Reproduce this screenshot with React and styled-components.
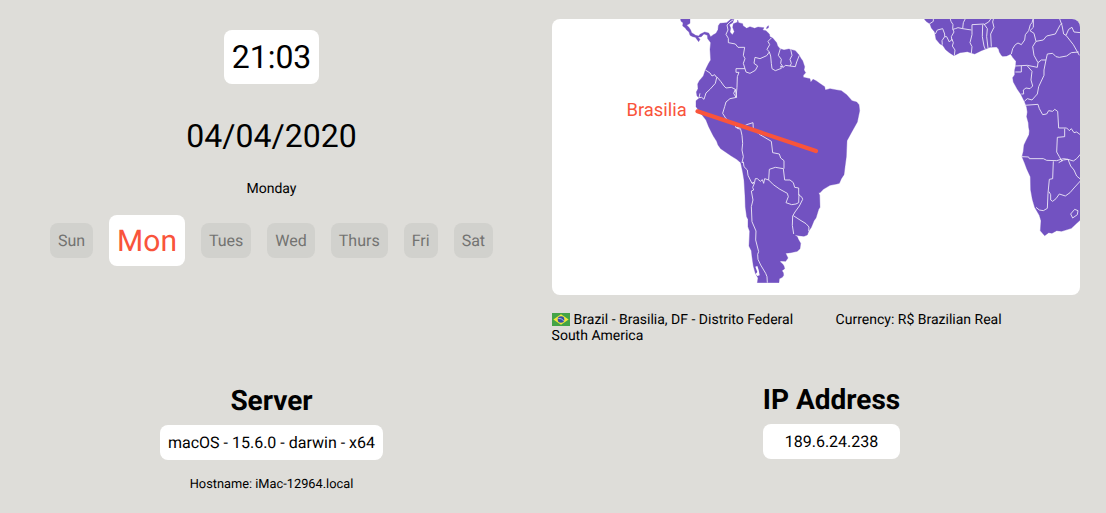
import React from 'react';
import styled, { createGlobalStyle, css } from 'styled-components';

const GlobalStyle = createGlobalStyle`
  * { box-sizing: border-box; }
  body {
    margin: 0;
    background: #deddd9;
    color: #000;
    font-family: Roboto, "Liberation Sans", sans-serif;
    font-size: 16px;
    line-height: 19px;
    text-rendering: geometricPrecision;
  }
`;

const Dashboard = styled.main`
  display: grid;
  grid-template-columns: 543px 1fr;
  grid-template-rows: 384px 129px;
  height: 513px;
  overflow: hidden;
`;

const DateTime = styled.section`
  display: flex;
  flex-direction: column;
  align-items: center;
  padding-top: 30px;
`;

const chip = css`
  padding: 8px;
  border-radius: 8px;
  background: #fff;
`;

const Clock = styled.time`
  ${chip}
  font-size: 32px;
  line-height: 38px;
`;

const FullDate = styled.div`
  margin-top: 33px;
  font-size: 32px;
  line-height: 38px;
`;

const Weekday = styled.div`
  margin-top: 26px;
  font-size: 14px;
  line-height: 16px;
`;

const Week = styled.ul`
  display: flex;
  align-items: center;
  gap: 16px;
  margin: 18px 0 0;
  padding: 0;
  list-style: none;
`;

const Day = styled.li`
  padding: ${({ $active }) => ($active ? '9px 8px 7px' : '8px')};
  border-radius: 8px;
  background: ${({ $active }) => ($active ? '#fff' : '#d1d1cd')};
  color: ${({ $active }) => ($active ? '#f9543b' : '#737371')};
  font-size: ${({ $active }) => ($active ? '30px' : '16px')};
  line-height: ${({ $active }) => ($active ? '35px' : '19px')};
`;

const Location = styled.section`
  padding: 19px 26px 0 9px;
`;

const MapCard = styled.div`
  height: 276px;
  border-radius: 8px;
  background: #fff;
  overflow: hidden;
`;

const WorldMap = styled.svg`
  display: block;
  width: 528px;
  height: 264px;
`;

const Land = styled.path`
  fill: #7252c1;
  stroke: #7252c1;
  stroke-width: 1;
  stroke-linejoin: round;
`;

const Borders = styled.path`
  fill: none;
  stroke: #eeeaf7;
  stroke-width: 2.7;
  stroke-linejoin: round;
`;

const Water = styled.path`
  fill: #fff;
`;

const Connector = styled.line`
  stroke: #f9543b;
  stroke-width: 4.2;
  stroke-linecap: round;
`;

const CityName = styled.text`
  fill: #f9543b;
  font-size: 18.4px;
`;

const Details = styled.div`
  display: grid;
  grid-template-columns: 284px 1fr;
  margin-top: 17px;
  margin-left: -0.4px;
  font-size: 14px;
  line-height: 16px;
`;

const Flag = styled.svg`
  display: inline-block;
  width: 18px;
  height: 13px;
  margin-right: 4px;
  vertical-align: -2px;
`;

const System = styled.section`
  display: flex;
  flex-direction: column;
  align-items: center;
`;

const Network = styled(System)`
  padding-left: 14px;
  margin-top: -1px;
`;

const Stack = styled.div`
  display: flex;
  flex-direction: column;
  text-align: center;
`;

const Title = styled.h2`
  margin: 0 0 8px;
  font-size: 28px;
  line-height: 33px;
  font-weight: 700;
`;

const Value = styled.div`
  ${chip}
`;

const Hostname = styled.div`
  margin-top: 17px;
  font-size: 12.8px;
  line-height: 15px;
`;

const week = ['Sun', 'Mon', 'Tues', 'Wed', 'Thurs', 'Fri', 'Sat'];

const americaCoast =
  'M30 20 33 34 39 38 38 48 46 54 50 60 57 66 60 76 68 80 76 82 82 90 86 95 90 88 84 82 94 80 102 72 112 76 113 86 119 94 122 98 120 118 122 150 116 160 106 180 100 198 88 212 83 222 84 236 79 246 81 258 88 264 78 272 78 290 92 310 108 330 116 350 130 378 140 394 144 405 152 416 184 438 200 448 212 458 218 486 222 510 225 558 226 590 230 620 234 628 234 650 239 664 237 708 244 722 246 740 250 768 256 790 264 804 262 818H327L328 806 337 802 341 796 340 788 336 782 344 776 342 768 338 762 332 757 330 753 347 754 354 744 347 730 362 728 382 724 390 716 392 700 385 688 382 680 374 674 386 677 402 679 412 675 416 664 424 652 432 632 438 624 446 598 450 592 449 556 446 548 450 548 460 538 480 526 500 522 508 520 514 506 522 494 525 470 529 440 531 392 544 368 562 336 569 302 567 284 560 276 546 272 530 254 514 242 500 240 480 236 466 240 464 230 452 222 438 212 429 208 422 217 420 206 400 202 400 196 407 188 402 180 404 170 398 152 392 144 388 136 376 122 356 117 342 120 330 116 323 108 320 98 308 84 300 80 298 72 288 62 278 60 282 53 264 51 254 55 240 50 230 55 219 47 218 41 206 38 203 30 202 37 190 41 188 52 193 65 187 74 180 66 182 54 178 44 188 38 192 27 182 28 170 38 150 40 145 47 144 59 138 70 130 74 122 80 116 69 104 66 90 73 86 78 77 76 65 68 62 60 56 51 50 46 60 40 60 20Z M291 50 296 47 295 54 289 56Z';

const americaBorders =
  'M190 29 180 36 171 45 174 60 168 73 175 85 175 98 196 102 204 112 224 112 220 136 225 146 220 160 225 176 198 176 198 187 207 187 202 200 201 232 198 262M225 176 228 186 240 190 256 181 263 168 252 160 255 142 270 146 290 137 298 126M304 84 294 94 299 104 291 118 298 126 302 138 304 160 306 176 316 182 334 175 332 168 340 172M331 116 325 136 334 148 332 160 340 172 346 166 360 168 364 160 360 148 366 136 362 118M360 168 376 170 380 156 388 136M106 180 120 189 126 198 134 194 140 203 136 220 120 238 108 249 102 268 95 262 87 263 90 250M140 200 152 214 162 228 168 234 184 232 196 238 191 250 198 262M196 238 200 262 180 266 168 276 164 290 158 310 168 326 186 340 196 338 197 352 212 354 220 350 230 344 249 338 250 358 270 374 304 394 308 428 328 432 332 444 342 452 342 476M200 354 212 358 216 376 218 400 216 420 220 440 216 458 220 456 222 470 232 480 234 496 246 520 254 516 256 506 262 506 271 514 277 509 281 520 284 506 296 510 298 478 316 472 340 476 344 510 360 510 370 518 374 532 386 534 386 554 396 562 398 568 388 588 375 606 368 618 367 646 371 672M296 510 310 524 330 538 352 550 355 560 348 578 365 584 378 582 386 578 387 552M370 617 390 630 408 641 417 651 416 663M246 520 254 518 248 532 251 540 244 543 249 570 244 590 246 635 258 663 257 690 266 725 263 733 264 748 272 765 287 790 291 800 292 818';

const africaCoast =
  'M38 20 48 34 60 42 64 54 74 66 78 88 90 102 98 106 107 119 118 128 132 137 150 128 172 125 194 132 214 122 240 112 260 111 266 118 268 126 274 136 278 139 290 138 302 132 308 142 318 154 317 168 314 180 314 194 308 203 310 216 322 238 332 252 344 276 350 292 352 306 350 320 355 338 356 352 358 362 357 374 348 392 342 405 340 424 336 440 344 460 350 476 361 500 362 540 367 568 374 592 388 616 393 632 391 662 404 677 416 668 426 670 440 662 455 664 484 655 500 640 520 622V20Z';

const africaBorders =
  'M58 42 70 34 70 24M76 72 82 60 98 56 104 72 104 80 96 92 97 104M104 80 110 80 118 96 126 88 130 98 127 108 135 120 133 137M120 24 123 34 129 44 128 56 132 66 124 80 126 92M128 58 136 56 144 53 158 56 160 38 167 24M158 56 184 60M184 130 186 110 180 98 186 74 186 44 222 42 232 56 230 80 234 114M218 44 217 80 222 108 226 118M222 44 236 36 244 24M244 110 242 72 252 52 248 36 251 24M304 132 308 116 316 104 324 99 334 104 344 90 346 74 356 62 361 44 366 38 370 24V52L360 62 372 70 378 94 368 110 372 136 384 158 382 172M378 94 400 90 410 78 436 72 450 46 456 40M448 24 456 46 461 72 468 76 490 104 508 136M468 76 476 58 486 52 492 66 512 68M384 158 394 150 408 150 412 132 428 130 438 140 448 142 470 138 484 128 506 126M408 150 402 180 402 196 386 230 382 252 366 270 352 266 343 274M316 168 352 166 382 172M316 186 334 186 334 168M352 168 366 184 363 210 368 228 360 236 348 234 340 240 341 252 334 252M343 286 384 283 388 296 398 314 410 312 416 302 428 304 434 298 443 304 446 354 470 354 478 362 484 356 492 368 500 366 512 375M464 356 464 380 442 382 440 426 448 440 456 454M336 440 356 441 358 446 400 446 410 451 440 452 460 446 474 448 490 453 500 446 512 432M446 458 460 450 474 448 482 468 492 480 500 498 512 508M430 454 428 506 418 508 414 550 412 595 400 602 388 600 378 592M417 545 422 554 422 570 428 574 438 566 448 552 466 558 480 548 492 534 512 512M482 612 494 598 504 602 502 614 488 624Z';

function LocationMap() {
  return (
    <WorldMap viewBox="0 0 528 264" role="img" aria-label="Map of Brasilia">
      <g transform="translate(118 -9) scale(.33333)">
        <Land d={americaCoast} />
        <Borders d={americaBorders} />
        <Water d="M256 770 262 768 266 780 269 796 262 798 257 792 262 786Z" />
      </g>
      <g transform="translate(358 -9) scale(.33333)">
        <Land d={africaCoast} />
        <Borders d={africaBorders} />
      </g>
      <Connector x1="145.5" y1="92.3" x2="264" y2="132" />
      <CityName x="134.7" y="97" textAnchor="end">Brasilia</CityName>
    </WorldMap>
  );
}

function BrazilFlag() {
  return (
    <Flag viewBox="0 0 18 13" aria-hidden="true">
      <rect width="18" height="13" fill="#43a447" />
      <path d="M1.4 6.5 9 1.2 16.6 6.5 9 11.8Z" fill="#f4e83d" />
      <circle cx="9" cy="6.5" r="3.3" fill="#3450a4" />
      <path d="M6.2 5.4Q9.4 5 11.8 7.8" fill="none" stroke="#c8d4ea" strokeWidth=".8" />
    </Flag>
  );
}

export default function App() {
  return (
    <>
      <GlobalStyle />
      <Dashboard>
        <DateTime>
          <Clock>21:03</Clock>
          <FullDate>04/04/2020</FullDate>
          <Weekday>Monday</Weekday>
          <Week>
            {week.map((day) => (
              <Day key={day} $active={day === 'Mon'}>{day}</Day>
            ))}
          </Week>
        </DateTime>
        <Location>
          <MapCard>
            <LocationMap />
          </MapCard>
          <Details>
            <div>
              <div><BrazilFlag />Brazil - Brasilia, DF - Distrito Federal</div>
              <div>South America</div>
            </div>
            <div>Currency: R$ Brazilian Real</div>
          </Details>
        </Location>
        <System>
          <Title>Server</Title>
          <Value>macOS - 15.6.0 - darwin - x64</Value>
          <Hostname>Hostname: iMac-12964.local</Hostname>
        </System>
        <Network>
          <Stack>
            <Title>IP Address</Title>
            <Value>189.6.24.238</Value>
          </Stack>
        </Network>
      </Dashboard>
    </>
  );
}
